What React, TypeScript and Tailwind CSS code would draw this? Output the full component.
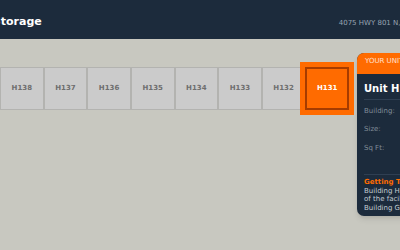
const units = ["H138", "H137", "H136", "H135", "H134", "H133", "H132", "H131"];

function UnitCell({ name, selected }: { name: string; selected: boolean }) {
  if (selected) {
    return (
      <div className="relative z-10 flex h-[43px] w-[43.625px] shrink-0 items-center justify-center border-2 border-[#a63c00] bg-[#ff6b00] text-[7px] font-bold text-white shadow-[0_0_0_5px_#ff6b00]">
        {name}
      </div>
    );
  }
  return (
    <div className="flex h-[43px] w-[43.625px] shrink-0 items-center justify-center border border-[#b3b3b0] bg-[#cbcbcb] text-[7px] font-bold text-[#6e6e6e]">
      {name}
    </div>
  );
}

export default function App() {
  return (
    <div className="h-[250px] w-[400px] overflow-hidden bg-[#c8c8c0] font-['DejaVu_Sans',sans-serif]">
      {/* Header */}
      <header className="flex h-[39px] w-max items-baseline bg-[#1c2b3c] pt-[14.5px]">
        <h1 className="-ml-[7.2px] shrink-0 text-[11px] font-bold leading-[14px] text-white">
          Storage
        </h1>
        <span className="ml-[297px] whitespace-nowrap text-[7px] text-[#98a4b2]">
          4075 HWY 801 N, Marion, NC 28752
        </span>
      </header>

      {/* Body */}
      <div className="flex w-max items-start">
        <div className="mt-[28px] flex">
          {units.map((u) => (
            <UnitCell key={u} name={u} selected={u === "H131"} />
          ))}
        </div>

        {/* Unit panel */}
        <aside className="ml-[8px] mt-[14px] flex h-[163px] w-[170px] shrink-0 flex-col overflow-hidden rounded-[7px] bg-[#1c2b3c] shadow-md">
          <div className="h-[21px] bg-[#ff6b00] px-[8px] pt-[3.5px] text-[7px] leading-[9px] text-white/80">
            YOUR UNIT
          </div>
          <div className="px-[7px]">
            <div className="border-b border-[#2f3f52] pb-[3px] pt-[8.2px]">
              <h2 className="text-[10px] font-bold leading-[14px] text-white">Unit H131</h2>
            </div>
            <div className="mt-[1.5px] text-[7px] text-[#808c98]">
              <div className="flex h-[18.5px] items-center justify-between">
                <span>Building:</span>
                <span className="text-white">H</span>
              </div>
              <div className="flex h-[18.5px] items-center justify-between">
                <span>Size:</span>
                <span className="text-white">10x10</span>
              </div>
              <div className="flex h-[18.5px] items-center justify-between">
                <span>Sq Ft:</span>
                <span className="text-white">100</span>
              </div>
            </div>
            <div className="mt-[17px] border-t border-[#2f3f52] pt-[3px] text-[7px] leading-[8.5px]">
              <p className="font-bold text-[#ff6b00]">Getting There</p>
              <p className="text-[#c3cbd3]">
                Building H is at the back
                <br />
                of the facility, behind
                <br />
                Building G.
              </p>
            </div>
          </div>
        </aside>
      </div>
    </div>
  );
}
